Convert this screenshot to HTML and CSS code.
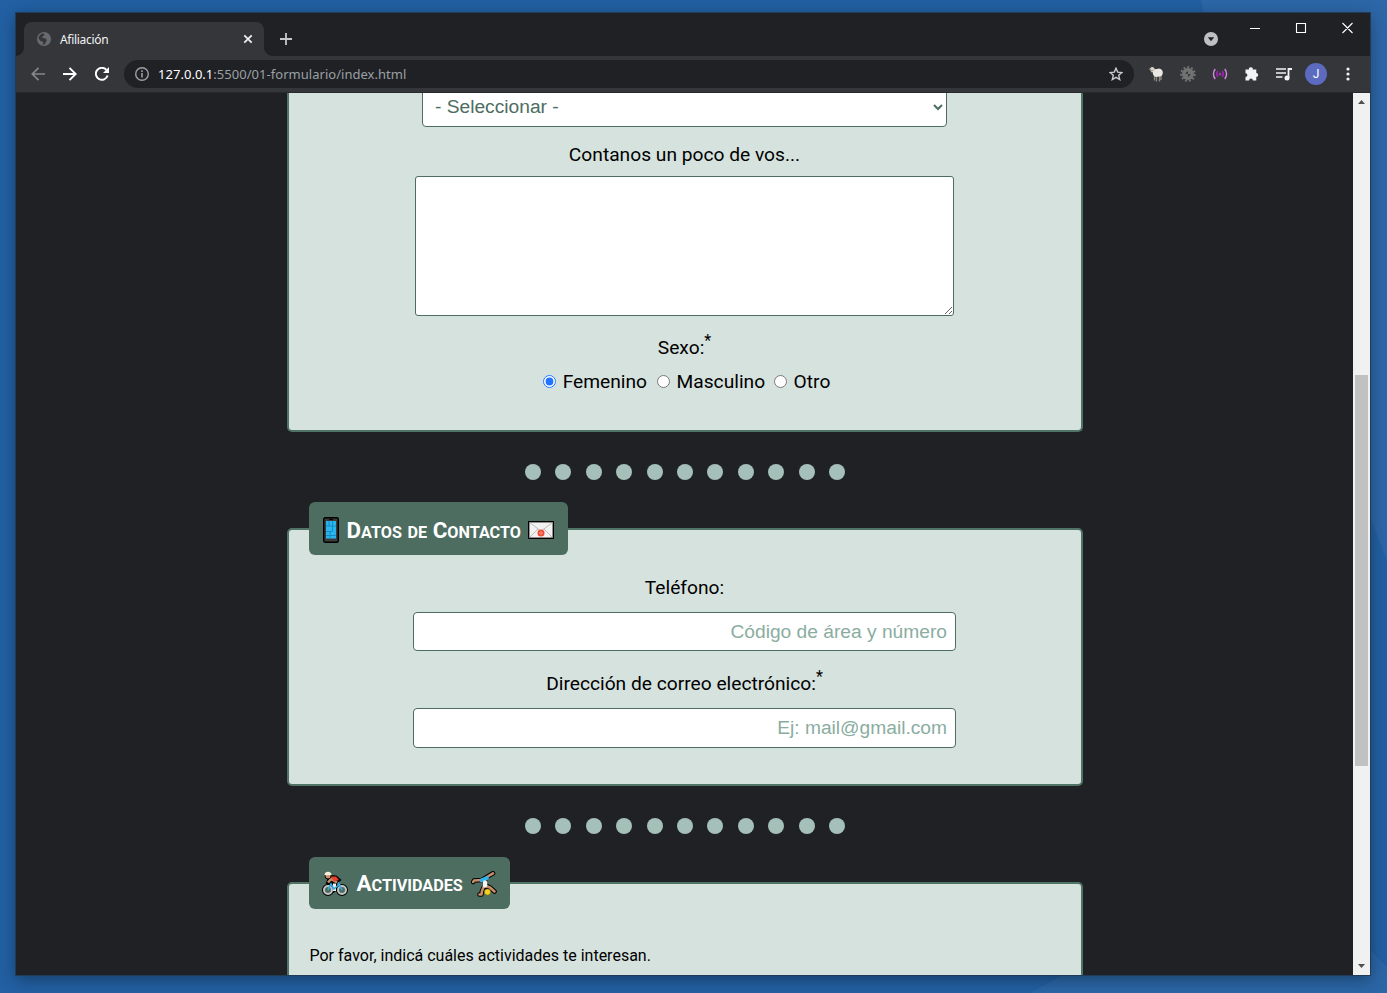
FILE: index.html
```html
<!DOCTYPE html>
<html lang="es">
<head>
<meta charset="utf-8">
<title>Afiliación</title>
<link rel="stylesheet" href="styles.css">
</head>
<body>
<svg class="wallpaper" width="1387" height="993" viewBox="0 0 1387 993">
  <rect width="1387" height="993" fill="#2260a3"/>
  <path d="M1201 0H1387V560L1371 520L1300 400L1210 40Z" fill="#2d67a8"/>
  <path d="M1030 993L1200 900L1371 951L1387 967V993Z" fill="#2b66a6"/>
</svg>
<div class="window">
  <header class="tabstrip">
    <div class="tab">
      <svg width="14" height="14" viewBox="0 0 14 14"><circle cx="7" cy="7" r="7" fill="#676b70"/><path d="M2 4.500C3.500 2 5 1.500 7 1.500L7.500 3L5.500 4.500L5.500 6L9 6.500L9.800 8.500L7.500 12.500H5.500L6.500 10L3.500 9L1.500 6.500Z" fill="#35363a"/></svg>
      <span class="tab-title">Afiliación</span>
      <svg width="10" height="10" viewBox="0 0 10 10"><path d="M1.300 1.300L8.700 8.700M8.700 1.300L1.300 8.700" stroke="#f1f3f4" stroke-width="1.700"/></svg>
    </div>
    <svg class="new-tab" width="12" height="12" viewBox="0 0 12 12"><path d="M6 0V12M0 6H12" stroke="#c4c7cb" stroke-width="1.800"/></svg>
    <svg class="tab-search" width="14" height="14" viewBox="0 0 14 14"><circle cx="7" cy="7" r="7" fill="#bdc1c6"/><path d="M3.800 5.200H10.200L7 9.200Z" fill="#202124"/></svg>
    <svg class="win-controls" width="104" height="12" viewBox="0 0 104 12"><path d="M0 6.500H10M46.500 1.500H55.500V10.500H46.500ZM92.500 1L102.500 11M102.500 1L92.500 11" fill="none" stroke="#fff" stroke-width="1.100"/></svg>
  </header>
  <nav class="toolbar">
    <div class="nav-icons">
      <svg width="14" height="14" viewBox="0 0 14 14"><path d="M14 7H1.500M7.500 .8L1.300 7L7.500 13.200" fill="none" stroke="#85878a" stroke-width="1.700"/></svg>
      <svg width="14" height="14" viewBox="0 0 14 14"><path d="M0 7H12.500M6.500 .8L12.700 7L6.500 13.200" fill="none" stroke="#fff" stroke-width="1.900"/></svg>
      <svg width="14" height="14" viewBox="0 0 14 14"><path d="M12.600 8.500A6 6 0 1 1 11.400 2.900" fill="none" stroke="#fff" stroke-width="2"/><path d="M14 0V6H8Z" fill="#fff"/></svg>
    </div>
    <div class="omnibox">
      <svg width="14" height="14" viewBox="0 0 14 14"><circle cx="7" cy="7" r="6.300" fill="none" stroke="#9aa0a6" stroke-width="1.400"/><path d="M7 6V10.500M7 3.300V4.900" stroke="#9aa0a6" stroke-width="1.600"/></svg>
      <span class="url"><b>127.0.0.1</b>:5500/01-formulario/index.html</span>
      <svg width="14" height="14" viewBox="0 0 14 14"><path d="M7 1.200L8.700 5.100L12.900 5.500L9.700 8.300L10.700 12.500L7 10.300L3.300 12.500L4.300 8.300L1.100 5.500L5.300 5.100Z" fill="none" stroke="#c9cbce" stroke-width="1.400"/></svg>
    </div>
    <div class="extensions">
      <svg width="16" height="16" viewBox="0 0 16 16"><path d="M6.500 9V14.500M8.500 9V15.500M11.500 9V15.500M13 9V14" stroke="#8d887d" stroke-width="1.300"/><path d="M4.500 5Q6 2.500 9 3Q12 1.500 14 4Q15.500 6 14.500 8.500Q13.500 11 11 10.500Q8 11.500 6 10Q4.500 8 4.500 5Z" fill="#e9e8e4"/><path d="M1 3L4 .8L6.500 2L6.500 5L3.500 6.500L2.500 4.500Z" fill="#d8d2c4"/><path d="M1 3.200H3M3 5.500L4.500 4" stroke="#5c574f" stroke-width=".8"/></svg>
      <svg width="16" height="16" viewBox="0 0 16 16"><circle cx="8" cy="8" r="6.800" fill="none" stroke="#727272" stroke-width="2" stroke-dasharray="2 1.880"/><circle cx="8" cy="8" r="6" fill="#727272"/><path d="M5 7.500L8 5V8ZM8 8V11L11 8.500Z" fill="#35363a"/></svg>
      <svg width="16" height="16" viewBox="0 0 16 16"><g fill="none" stroke-width="1.400"><path d="M3.200 3Q-.3 8 3.200 13M12.800 3Q16.300 8 12.800 13" stroke="#d18ae0"/><path d="M5.700 5Q3.700 8 5.700 11M10.300 5Q12.300 8 10.300 11" stroke="#9c27b0"/></g><circle cx="8" cy="8" r="1.500" fill="#a62bc0"/></svg>
      <svg width="16" height="16" viewBox="0 0 16 16"><path d="M1.500 3.500H5A1.900 1.900 0 1 1 8.700 3.500H12.300V7A1.900 1.900 0 1 1 12.300 10.800V14.500H8.900A1.900 1.900 0 0 0 5.100 14.500H1.500V11A1.900 1.900 0 0 0 1.500 7.200Z" fill="#f1f3f4"/></svg>
      <svg width="16" height="14" viewBox="0 0 16 14"><path d="M0 2H10M0 6H10M0 10H6.500" stroke="#f1f3f4" stroke-width="1.700"/><path d="M12.500 11V2H16" fill="none" stroke="#f1f3f4" stroke-width="1.800"/><circle cx="11" cy="11" r="2.500" fill="#f1f3f4"/></svg>
      <span class="avatar">J</span>
      <svg width="4" height="14" viewBox="0 0 4 14"><g fill="#f1f3f4"><circle cx="2" cy="2" r="1.600"/><circle cx="2" cy="7" r="1.600"/><circle cx="2" cy="12" r="1.600"/></g></svg>
    </div>
  </nav>
  <div class="viewport">
    <main class="page">
      <section class="card card-personal">
        <select class="choice"><option>- Seleccionar -</option></select>
        <label class="label about">Contanos un poco de vos...</label>
        <textarea class="bio"></textarea>
        <div class="label sex">Sexo:<sup>*</sup></div>
        <div class="radios">
          <label><input type="radio" name="sexo" checked><span>Femenino</span></label>
          <label><input type="radio" name="sexo"><span>Masculino</span></label>
          <label><input type="radio" name="sexo"><span>Otro</span></label>
        </div>
      </section>
      <div class="dots"><i></i><i></i><i></i><i></i><i></i><i></i><i></i><i></i><i></i><i></i><i></i></div>
      <section class="card card-contact">
        <h2 class="legend legend-contact">
          <svg width="16" height="26" viewBox="0 0 16 26"><rect x=".7" y=".7" width="14.600" height="24.600" rx="1.500" fill="#3a3a3a" stroke="#000" stroke-width="1.400"/><rect x="3" y="4" width="10" height="17.500" fill="#29b6f0"/><path d="M3 9H13M3 14.500H9M3 18.500H13M6 4V9M9.500 4V14.500M7 14.500V21" stroke="#1482b4" stroke-width=".8"/><path d="M6 2.400H10" stroke="#000"/></svg>
          <span class="legend-text">D<small>atos</small> <small>de</small> C<small>ontacto</small></span>
          <svg width="26" height="18" viewBox="0 0 26 18"><rect x=".7" y=".7" width="24.600" height="16.600" fill="#f2f2f2" stroke="#000" stroke-width="1.400"/><path d="M1.500 1.500L13 10L24.500 1.500M1.500 16.500L10 8M24.500 16.500L16 8" fill="none" stroke="#bbb"/><circle cx="13" cy="12" r="3.500" fill="#ed4a35"/><circle cx="13" cy="12" r="1.300" fill="none" stroke="#ffc1b6" stroke-width=".6"/></svg>
        </h2>
        <label class="label phone-label">Teléfono:</label>
        <input class="field phone" placeholder="Código de área y número">
        <label class="label mail-label">Dirección de correo electrónico:<sup>*</sup></label>
        <input class="field mail" placeholder="Ej: mail@gmail.com">
      </section>
      <div class="dots"><i></i><i></i><i></i><i></i><i></i><i></i><i></i><i></i><i></i><i></i><i></i></div>
      <section class="card card-activities">
        <h2 class="legend legend-activities">
          <svg width="26" height="26" viewBox="0 0 26 26"><g fill="none" stroke="#000" stroke-width="4"><circle cx="6" cy="19" r="4"/><circle cx="20" cy="19" r="4"/></g><path d="M6 9L9 5L14 5.500L18 9L14 12V19L11 21L10 13L5 12Z" fill="#000" stroke="#000" stroke-width="2"/><g fill="#4d6d61" stroke="#c4c4c4" stroke-width="2"><circle cx="6" cy="19" r="4"/><circle cx="20" cy="19" r="4"/></g><path d="M6 11.500L9 8L15 11.500" fill="none" stroke="#c68e6a" stroke-width="2.500"/><path d="M8.500 5.500L14 5.500L17 9L12 10.500Z" fill="#e9402b"/><path d="M12.500 12.500V20" stroke="#eee" stroke-width="3"/><path d="M6 19L9 13L12 18L17 13.500L20 19M16 11.500L18 14" fill="none" stroke="#36a8df" stroke-width="1.600"/><circle cx="6" cy="5" r="3" fill="#c68e6a" stroke="#000"/><path d="M2.500 4.300A3.500 3.500 0 0 1 9.500 4.300Z" fill="#f5f0dc"/></svg>
          <span class="legend-text">A<small>ctividades</small></span>
          <svg width="26" height="26" viewBox="0 0 26 26"><g fill="none" stroke-linecap="round" stroke-linejoin="round"><path d="M22 2.300L15 6.500L11 9L3 9.500L2.200 11M14 9L13.500 15L11 20L10.500 23.500H8.500M14 14L19 16.500L23.500 20.500" stroke="#000" stroke-width="4.600"/><path d="M22 2.300L15 6.500M11 9L3 9.500L2.200 11M13 15L11 20L10.500 23.500H8.500M15 15L19 16.500L23.500 20.500" stroke="#c68e6a" stroke-width="2.600"/><path d="M16 7L10.500 9.300" stroke="#36b3e8" stroke-width="3.800"/><path d="M14 11.500L14 14.500" stroke="#f5f5f5" stroke-width="4.500"/></g><circle cx="16.500" cy="21" r="3.100" fill="#f4d321" stroke="#806c10" stroke-width=".7"/></svg>
        </h2>
        <p class="intro">Por favor, indicá cuáles actividades te interesan.</p>
      </section>
    </main>
    <aside class="scrollbar">
      <svg width="17" height="17" viewBox="0 0 17 17"><path d="M5 11L8.500 7L12 11Z" fill="#505050"/></svg>
      <div class="thumb"></div>
      <svg width="17" height="17" viewBox="0 0 17 17"><path d="M5 6L8.500 10L12 6Z" fill="#505050"/></svg>
    </aside>
  </div>
</div>
</body>
</html>
```
FILE: styles.css
```css
* { box-sizing: border-box; }
body { margin: 0; width: 1387px; height: 993px; overflow: hidden; background: #2260a3; padding: 13px 0 0 16px; font-family: Roboto, sans-serif; }
svg { display: block; flex: none; }
.wallpaper { position: absolute; left: 0; top: 0; z-index: -1; }
.window { width: 1354px; height: 962px; background: #202124; box-shadow: 0 0 0 1px #213c59, 0 4px 16px rgba(0, 0, 0, .38); display: flex; flex-direction: column; }

/* Browser chrome */
.tabstrip { height: 43px; display: flex; padding: 9px 16px 0 8px; font-family: "Noto Sans", sans-serif; }
.tab { position: relative; width: 240px; height: 34px; border-radius: 8px 8px 0 0; background: #35363a; display: flex; align-items: center; padding: 0 11px 0 13px; }
.tab::before, .tab::after { content: ""; position: absolute; bottom: 0; width: 8px; height: 8px; }
.tab::before { left: -8px; background: radial-gradient(circle at 0 0, transparent 7.500px, #35363a 8px); }
.tab::after { right: -8px; background: radial-gradient(circle at 100% 0, transparent 7.500px, #35363a 8px); }
.tab-title { flex: 1; margin-left: 9px; font-size: 12px; letter-spacing: -.3px; color: #f1f3f4; }
.new-tab { margin: 11px 0 0 16px; }
.tab-search { margin: 10px 0 0 auto; }
.win-controls { margin-left: 32px; }
.toolbar { height: 37px; background: #35363a; border-bottom: 1px solid #28292c; display: flex; align-items: center; padding: 0 20px 0 15px; font-family: "Noto Sans", sans-serif; }
.nav-icons { display: flex; gap: 18px; width: 93px; }
.omnibox { width: 1010px; height: 28px; border-radius: 14px; background: #202124; display: flex; align-items: center; padding: 0 11px; }
.url { flex: 1; margin-left: 9px; font-size: 13px; letter-spacing: .03px; color: #9aa0a6; }
.url b { font-weight: 400; color: #fff; }
.extensions { display: grid; grid-template-columns: repeat(7, 32px); align-items: center; justify-items: center; margin: 0 -20px 0 6px; }
.avatar { width: 22px; height: 22px; border-radius: 50%; background: #5c6bc0; color: #fff; font: 12px/22px Roboto, sans-serif; text-align: center; }

/* Page */
.viewport { height: 882px; display: flex; overflow: hidden; }
.page { width: 1337px; display: flex; flex-direction: column; align-items: center; overflow: hidden; }
.card { width: 796px; flex: none; border: 2px solid #4f7466; border-radius: 5px; background: #d6e2dd; display: flex; flex-direction: column; align-items: center; }
.card-personal { height: 339px; border-top: 0; border-radius: 0 0 5px 5px; }
.card-contact { height: 258px; margin-top: 48px; }
.card-activities { height: 120px; margin-top: 48px; }
.label, .radios { font-size: 19.200px; line-height: 22px; color: #000; white-space: nowrap; }
.label sup { font-size: 16px; line-height: 0; vertical-align: 8px; }
.choice { width: 525px; height: 40px; flex: none; margin-top: -6px; padding: 0 2px 2px 8px; border: 1px solid #4d6d61; border-radius: 4px; background-color: #fff; color: #4d6d61; font: 19.200px "Liberation Sans", sans-serif; }
.about { margin-top: 17px; }
.bio { width: 539px; height: 140px; flex: none; margin-top: 10px; border: 1px solid #4d6d61; border-radius: 3px; background: #fff; }
.sex { margin-top: 21px; }
.radios { display: flex; margin: 12px 0 0 4px; }
.radios label { display: flex; align-items: center; gap: 7px; margin-right: 9.500px; }
.radios label:nth-child(2) { margin-right: 8.500px; }
.radios label:last-child { margin-right: 0; }
.radios input { width: 13px; height: 13px; margin: 0 0 1px; accent-color: #2374ff; }
.dots { flex: none; display: flex; gap: 14.400px; margin: 32px 0 0 1px; }
.dots i { width: 16px; height: 16px; border-radius: 50%; background: #a5c0b8; }
.legend { align-self: flex-start; flex: none; margin: -28px 0 0 20px; border-radius: 6px; background: #4d6d61; color: #fff; font-size: 22.400px; line-height: 26px; white-space: nowrap; display: flex; align-items: center; gap: 8px; }
.legend-text { padding-top: 3px; }
.legend-text small { font-size: 16.200px; text-transform: uppercase; }
.legend-contact { width: 259px; height: 53px; padding: 2px 14px 0; }
.legend-contact .legend-text { width: 173px; }
.legend-activities { width: 201px; height: 52px; margin-top: -27px; padding: 2px 13px 0; }
.legend-activities .legend-text { width: 106px; margin-left: 1px; padding-top: 1px; }
.phone-label { margin-top: 22px; }
.field { width: 543px; flex: none; border: 1px solid #4d6d61; border-radius: 4px; padding: 0 8px; background: #fff; text-align: right; font: 19.200px "Liberation Sans", sans-serif; }
.field::placeholder { color: #8aada0; opacity: 1; }
.phone { height: 39px; margin-top: 13px; }
.mail-label { margin-top: 22px; }
.mail { height: 40px; margin-top: 13px; }
.intro { align-self: flex-start; margin: 37px 0 0 21px; font-size: 16px; line-height: 19px; color: #000; }

/* Scrollbar */
.scrollbar { width: 17px; background: #f1f1f1; display: flex; flex-direction: column; align-items: center; justify-content: space-between; }
.thumb { width: 13px; height: 391px; margin: 265px 0 192px; background: #c1c1c1; }
```
